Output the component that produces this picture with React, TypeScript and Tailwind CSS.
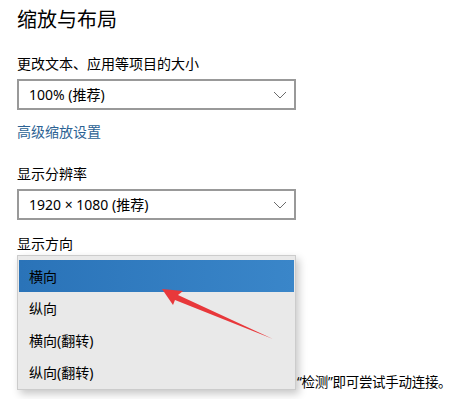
const FONT = "font-['Noto_Sans','Noto_Sans_CJK_SC',sans-serif]"

function Chevron() {
  return (
    <svg width="14" height="8" viewBox="0 0 14 8" className="shrink-0">
      <path d="M1 1 L7 7 L13 1" fill="none" stroke="#6b6b6b" strokeWidth="1" />
    </svg>
  )
}

function Select({ value }: { value: string }) {
  return (
    <div className="mt-[5px] flex h-[31px] w-[279px] items-center justify-between border-2 border-[#999999] bg-white pl-[10px] pr-[7px]">
      <span className="text-[14px] text-black">{value}</span>
      <Chevron />
    </div>
  )
}

const OPTIONS = ['横向', '纵向', '横向(翻转)', '纵向(翻转)']

export default function App() {
  return (
    <div className={`relative h-[399px] w-[454px] overflow-hidden bg-white ${FONT}`}>
      <div className="pl-[17px] pt-[6px]">
        <h1 className="text-[20px] leading-[28px] font-normal text-black">缩放与布局</h1>

        <p className="mt-[20px] text-[14px] leading-[20px] text-black">更改文本、应用等项目的大小</p>
        <Select value="100% (推荐)" />

        <a className="mt-[12px] block text-[14px] leading-[20px] text-[#2b6294]">高级缩放设置</a>

        <p className="mt-[22px] text-[14px] leading-[20px] text-black">显示分辨率</p>
        <Select value="1920 × 1080 (推荐)" />

        <p className="mt-[14px] text-[14px] leading-[20px] text-black">显示方向</p>

        <p className="ml-[280px] mt-[118px] whitespace-nowrap text-[13.5px] leading-[20px] tracking-[-0.3px] text-black">“检测”即可尝试手动连接。</p>
      </div>

      {/* orientation dropdown, open */}
      <div className="absolute left-[17px] top-[255px] h-[135px] w-[279px] border border-[#cccccc] bg-[#e9e9e9] px-[1px] pt-[4px] shadow-[3px_4px_8px_rgba(0,0,0,0.22)]">
        {OPTIONS.map((o, i) => (
          <div
            key={o}
            className={`flex h-[32px] items-center pl-[10px] text-[14px] text-black ${i === 0 ? 'bg-gradient-to-r from-[#2a73b8] to-[#3a86c9]' : ''}`}
          >
            {o}
          </div>
        ))}
      </div>

      {/* annotation arrow */}
      <svg className="pointer-events-none absolute left-0 top-0" width="454" height="399">
        <polygon points="162,289 183,291 178,295 273,339 175,300 173,305" fill="#e8383b" />
      </svg>
    </div>
  )
}
